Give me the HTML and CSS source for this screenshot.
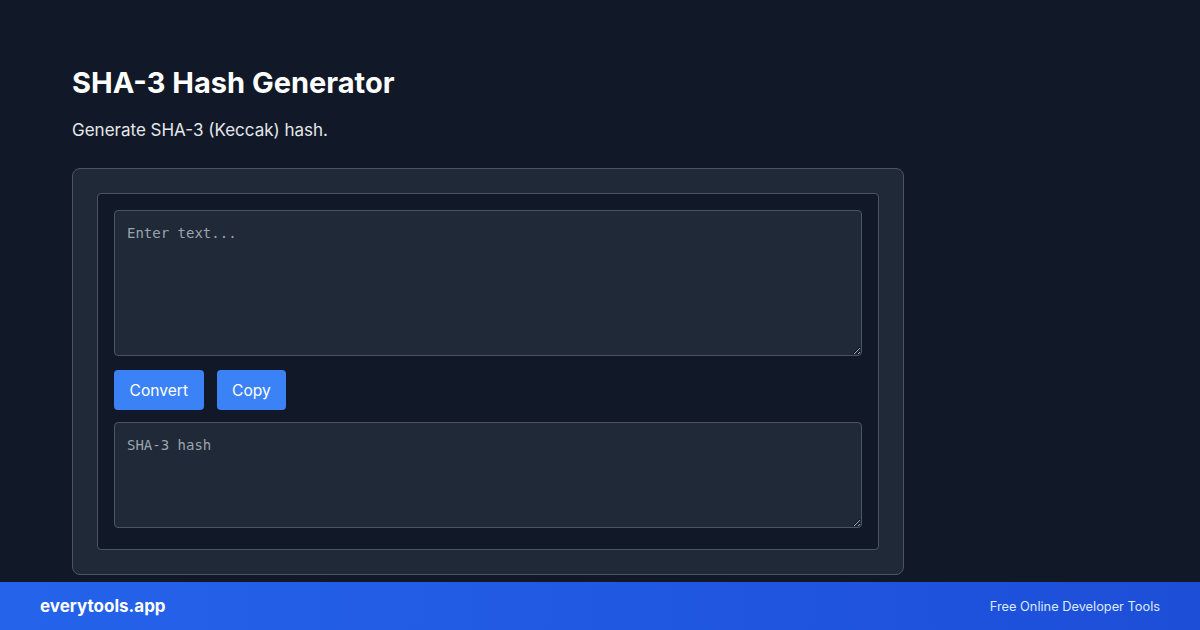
FILE: index.html
```html
<!DOCTYPE html>
<html lang="en">
<head>
<meta charset="utf-8">
<title>SHA-3 Hash Generator</title>
<link rel="stylesheet" href="styles.css">
</head>
<body>
<main class="page">
  <h1 class="title">SHA-3 Hash Generator</h1>
  <p class="subtitle">Generate SHA-3 (Keccak) hash.</p>
  <section class="card">
    <div class="tool">
      <textarea class="field field-input" placeholder="Enter text..."></textarea>
      <div class="actions">
        <button class="btn" type="button">Convert</button>
        <button class="btn" type="button">Copy</button>
      </div>
      <textarea class="field field-output" placeholder="SHA-3 hash" readonly></textarea>
    </div>
  </section>
</main>
<footer class="footer">
  <span class="brand">everytools.app</span>
  <span class="tagline">Free Online Developer Tools</span>
</footer>
</body>
</html>
```

FILE: styles.css
```css
* { box-sizing: border-box; }
html, body { margin: 0; padding: 0; }
body {
  background: #111827;
  color: #f9fafb;
  font-family: Inter, "Noto Sans", "Liberation Sans", sans-serif;
  width: 1200px;
  height: 630px;
  overflow: hidden;
}
.page {
  padding: 64px 72px 0 72px;
  width: 904px;
  box-sizing: content-box;
}
.title {
  margin: 0;
  font-size: 29px;
  line-height: 38px;
  font-weight: 700;
  color: #ffffff;
}
.subtitle {
  margin: 16px 0 0 0;
  font-size: 17px;
  line-height: 24px;
  color: #e5e7eb;
}
.card {
  margin-top: 26px;
  background: #1f2937;
  border: 1px solid #4b5563;
  border-radius: 8px;
  padding: 24px;
  width: 832px;
}
.tool {
  background: #111827;
  border: 1px solid #4b5563;
  border-radius: 4px;
  padding: 16px 16px 21px 16px;
  display: flex;
  flex-direction: column;
}
.field {
  display: block;
  width: 100%;
  background: #1f2937;
  border: 1px solid #4b5563;
  border-radius: 4px;
  padding: 12px;
  font-family: "DejaVu Sans Mono", "Liberation Mono", monospace;
  font-size: 14px;
  line-height: 20px;
  color: #e5e7eb;
  resize: vertical;
  outline: none;
}
.field::placeholder { color: #9ca3af; }
.field-input { height: 146px; }
.field-output { height: 106px; }
.actions {
  display: flex;
  gap: 13px;
  margin: 14px 0 12px 0;
}
.btn {
  height: 40px;
  padding: 0 15.5px;
  border: none;
  border-radius: 4px;
  background: #3b82f6;
  color: #ffffff;
  font-family: Inter, "Noto Sans", "Liberation Sans", sans-serif;
  font-size: 15.6px;
  cursor: pointer;
}
.footer {
  position: fixed;
  left: 0;
  right: 0;
  bottom: 0;
  height: 48px;
  background: linear-gradient(90deg, #2563eb, #1d4ed8);
  display: flex;
  align-items: center;
  justify-content: space-between;
  padding: 0 40px;
}
.brand {
  font-size: 17px;
  font-weight: 700;
  color: #ffffff;
}
.tagline {
  font-size: 12.8px;
  color: #dbeafe;
}
```
